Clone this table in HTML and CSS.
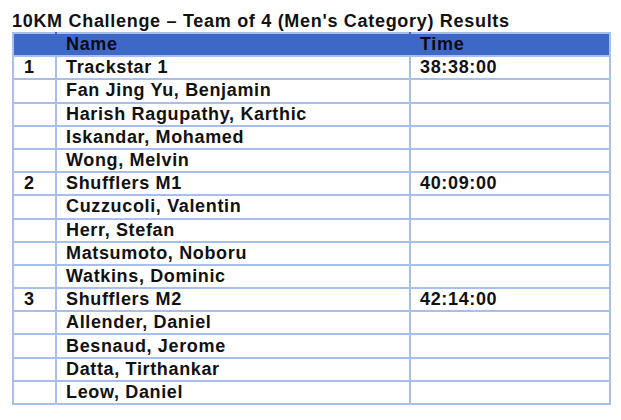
FILE: index.html
```html
<!DOCTYPE html>
<html>
<head>
<meta charset="utf-8">
<link rel="stylesheet" href="styles.css">
</head>
<body>
<div class="page">
  <h1 class="title">10KM Challenge – Team of 4 (Men's Category) Results</h1>
  <table class="results">
    <colgroup><col class="c-pos"><col class="c-name"><col class="c-time"></colgroup>
    <thead>
      <tr><th></th><th>Name</th><th>Time</th></tr>
    </thead>
    <tbody>
      <tr><td>1</td><td>Trackstar 1</td><td>38:38:00</td></tr>
      <tr><td></td><td>Fan Jing Yu, Benjamin</td><td></td></tr>
      <tr><td></td><td>Harish Ragupathy, Karthic</td><td></td></tr>
      <tr><td></td><td>Iskandar, Mohamed</td><td></td></tr>
      <tr><td></td><td>Wong, Melvin</td><td></td></tr>
      <tr><td>2</td><td>Shufflers M1</td><td>40:09:00</td></tr>
      <tr><td></td><td>Cuzzucoli, Valentin</td><td></td></tr>
      <tr><td></td><td>Herr, Stefan</td><td></td></tr>
      <tr><td></td><td>Matsumoto, Noboru</td><td></td></tr>
      <tr><td></td><td>Watkins, Dominic</td><td></td></tr>
      <tr><td>3</td><td>Shufflers M2</td><td>42:14:00</td></tr>
      <tr><td></td><td>Allender, Daniel</td><td></td></tr>
      <tr><td></td><td>Besnaud, Jerome</td><td></td></tr>
      <tr><td></td><td>Datta, Tirthankar</td><td></td></tr>
      <tr><td></td><td>Leow, Daniel</td><td></td></tr>
    </tbody>
  </table>
</div>
</body>
</html>
```
FILE: styles.css
```css
html, body {
  margin: 0;
  padding: 0;
  background: #ffffff;
}
.page {
  padding: 11px 0 0 12px;
  font-family: "Liberation Sans", Arial, sans-serif;
  color: #111111;
}
.title {
  margin: 0;
  font-size: 18px;
  font-weight: bold;
  line-height: 21px;
  letter-spacing: 0.7px;
  white-space: nowrap;
}
.results {
  border-collapse: collapse;
  width: 597px;
  table-layout: fixed;
  font-size: 18px;
  font-weight: bold;
  letter-spacing: 0.65px;
}
.c-pos { width: 43px; }
.c-name { width: 354px; }
.c-time { width: 200px; }
.results tr {
  height: 23.2px;
}
.results th,
.results td {
  padding: 0 0 0 9px;
  border: 2px solid #a9bfeb;
  text-align: left;
  vertical-align: middle;
  line-height: 19px;
  white-space: nowrap;
}
.results th {
  background: #3d68c7;
  color: #0a0a14;
  border-left-color: #3d68c7;
  border-right-color: #3d68c7;
}
.results th:first-child {
  border-left-color: #a9bfeb;
}
.results th:last-child {
  border-right-color: #a9bfeb;
}
.results td:first-child {
  padding-left: 10px;
}
```
